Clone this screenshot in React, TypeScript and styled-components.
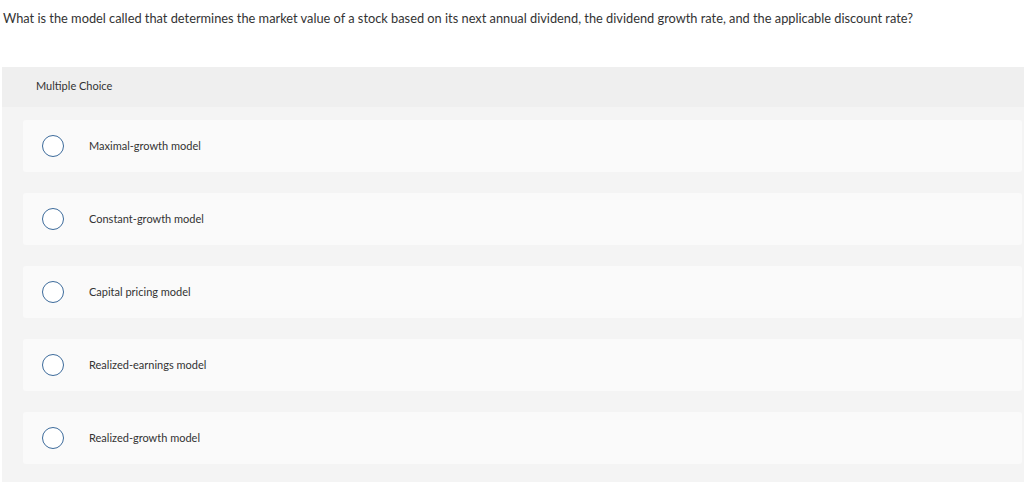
import React from 'react';
import styled, { createGlobalStyle } from 'styled-components';

const GlobalStyle = createGlobalStyle`
  html, body {
    margin: 0;
    padding: 0;
    background: #ffffff;
  }
  body {
    font-family: Lato, "Liberation Sans", Arial, sans-serif;
    color: #333333;
  }
`;

const options = [
  'Maximal-growth model',
  'Constant-growth model',
  'Capital pricing model',
  'Realized-earnings model',
  'Realized-growth model',
];

function App() {
  return (
    <Page>
      <GlobalStyle />
      <Question>
        What is the model called that determines the market value of a stock based on its next annual dividend, the dividend
        growth rate, and the applicable discount rate?
      </Question>
      <Panel>
        <PanelHeader>Multiple Choice</PanelHeader>
        <OptionList>
          {options.map((label) => (
            <Option key={label}>
              <Radio />
              <OptionLabel>{label}</OptionLabel>
            </Option>
          ))}
        </OptionList>
      </Panel>
    </Page>
  );
}

const Page = styled.div`
  width: 1024px;
  height: 482px;
  overflow: hidden;
`;
const Question = styled.div`
  padding: 11px 0 0 3px;
  height: 67px;
  box-sizing: border-box;
  font-size: 12.8px;
  line-height: 15px;
  white-space: nowrap;
`;
const Panel = styled.div`
  margin-left: 2px;
  background: #f4f4f4;
  min-height: 440px;
`;
const PanelHeader = styled.div`
  height: 40px;
  box-sizing: border-box;
  display: flex;
  align-items: center;
  padding: 0 0 3px 34px;
  background: #efefef;
  font-size: 11px;
`;
const OptionList = styled.div`
  display: flex;
  flex-direction: column;
  gap: 21px;
  padding: 13px 2px 0 21px;
`;
const Option = styled.div`
  height: 52px;
  box-sizing: border-box;
  display: flex;
  align-items: center;
  padding: 0 0 1px 19px;
  background: #fafafa;
  border-radius: 3px;
`;
const Radio = styled.span`
  width: 22px;
  height: 22px;
  box-sizing: border-box;
  border-radius: 50%;
  border: 1.5px solid #3d6b9b;
  background: #ffffff;
  flex-shrink: 0;
`;
const OptionLabel = styled.span`
  margin-left: 25px;
  font-size: 11px;
  line-height: 13px;
`;

export default App;
